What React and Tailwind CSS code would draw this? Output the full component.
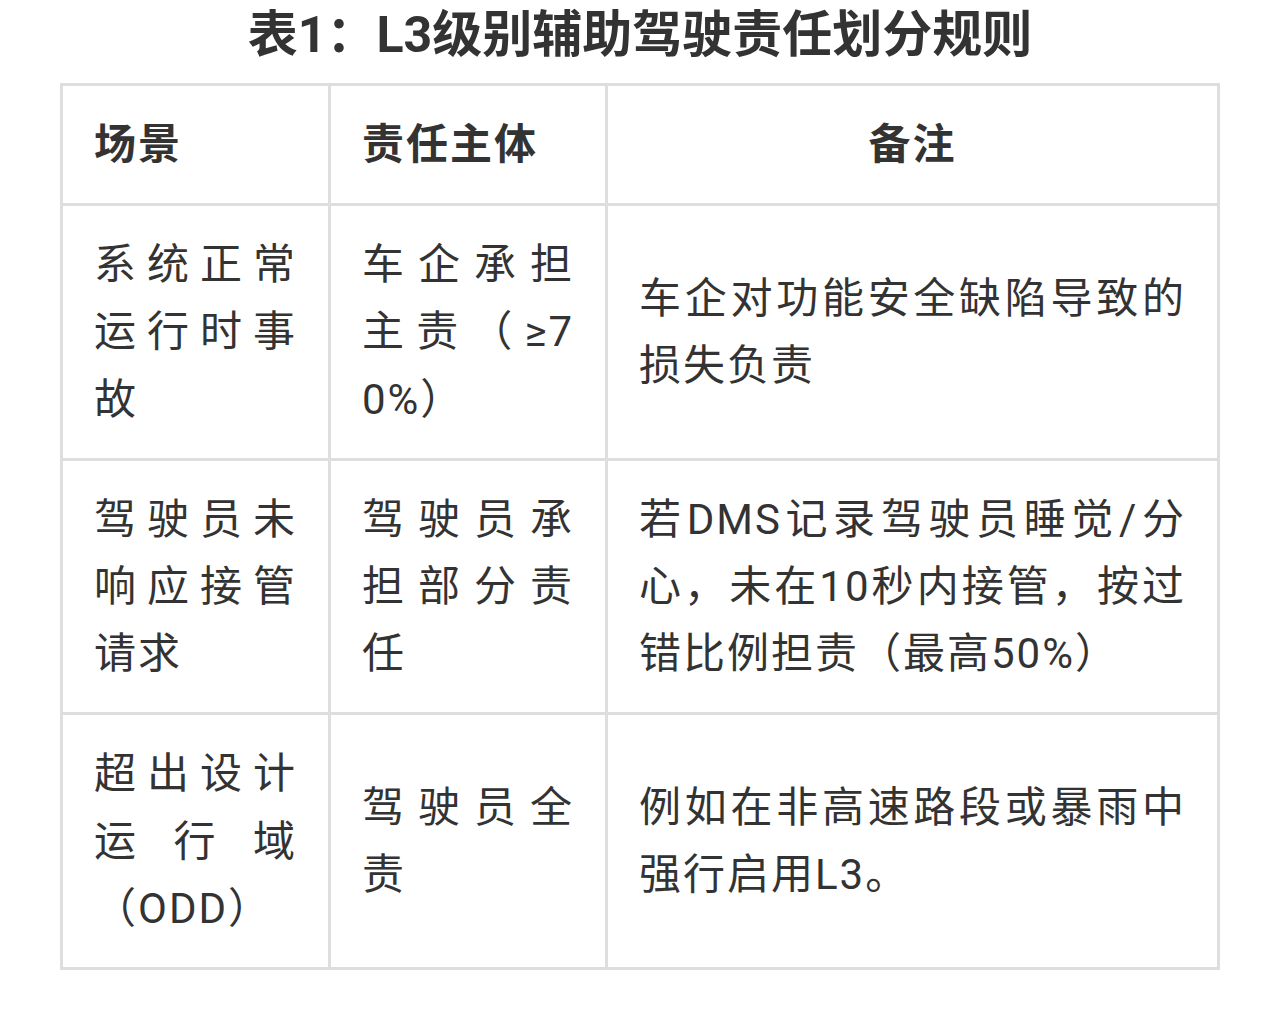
export default function App() {
  const rows = [
    ["系统正常运行时事故", "车企承担主责（≥70%）", "车企对功能安全缺陷导致的损失负责"],
    ["驾驶员未响应接管请求", "驾驶员承担部分责任", "若DMS记录驾驶员睡觉/分心，未在10秒内接管，按过错比例担责（最高50%）"],
    ["超出设计运行域（ODD）", "驾驶员全责", "例如在非高速路段或暴雨中强行启用L3。"],
  ];
  const td = "border-[3px] border-[#dedede] px-[31px] py-[25px] align-middle text-justify break-all";
  return (
    <div className="w-[1280px] h-[1012px] bg-white text-[#333333] font-['Roboto','Noto_Sans_CJK_SC',sans-serif]">
      <h1 className="text-center text-[50px] leading-[70px] font-bold mb-[13px]">
        表1：L3级别辅助驾驶责任划分规则
      </h1>
      <table className="ml-[60px] w-[1157px] table-fixed border-collapse text-[42px] leading-[1.6] tracking-[2px]">
        <colgroup>
          <col className="w-[268px]" />
          <col className="w-[277px]" />
          <col className="w-[612px]" />
        </colgroup>
        <thead>
          <tr>
            <th className={td + " text-left font-bold"}>场景</th>
            <th className={td + " text-left font-bold"}>责任主体</th>
            <th className={td + " text-center! font-bold"}>备注</th>
          </tr>
        </thead>
        <tbody>
          {rows.map((r, i) => (
            <tr key={i}>
              {r.map((c, j) => (
                <td key={j} className={td}>{c}</td>
              ))}
            </tr>
          ))}
        </tbody>
      </table>
    </div>
  );
}
